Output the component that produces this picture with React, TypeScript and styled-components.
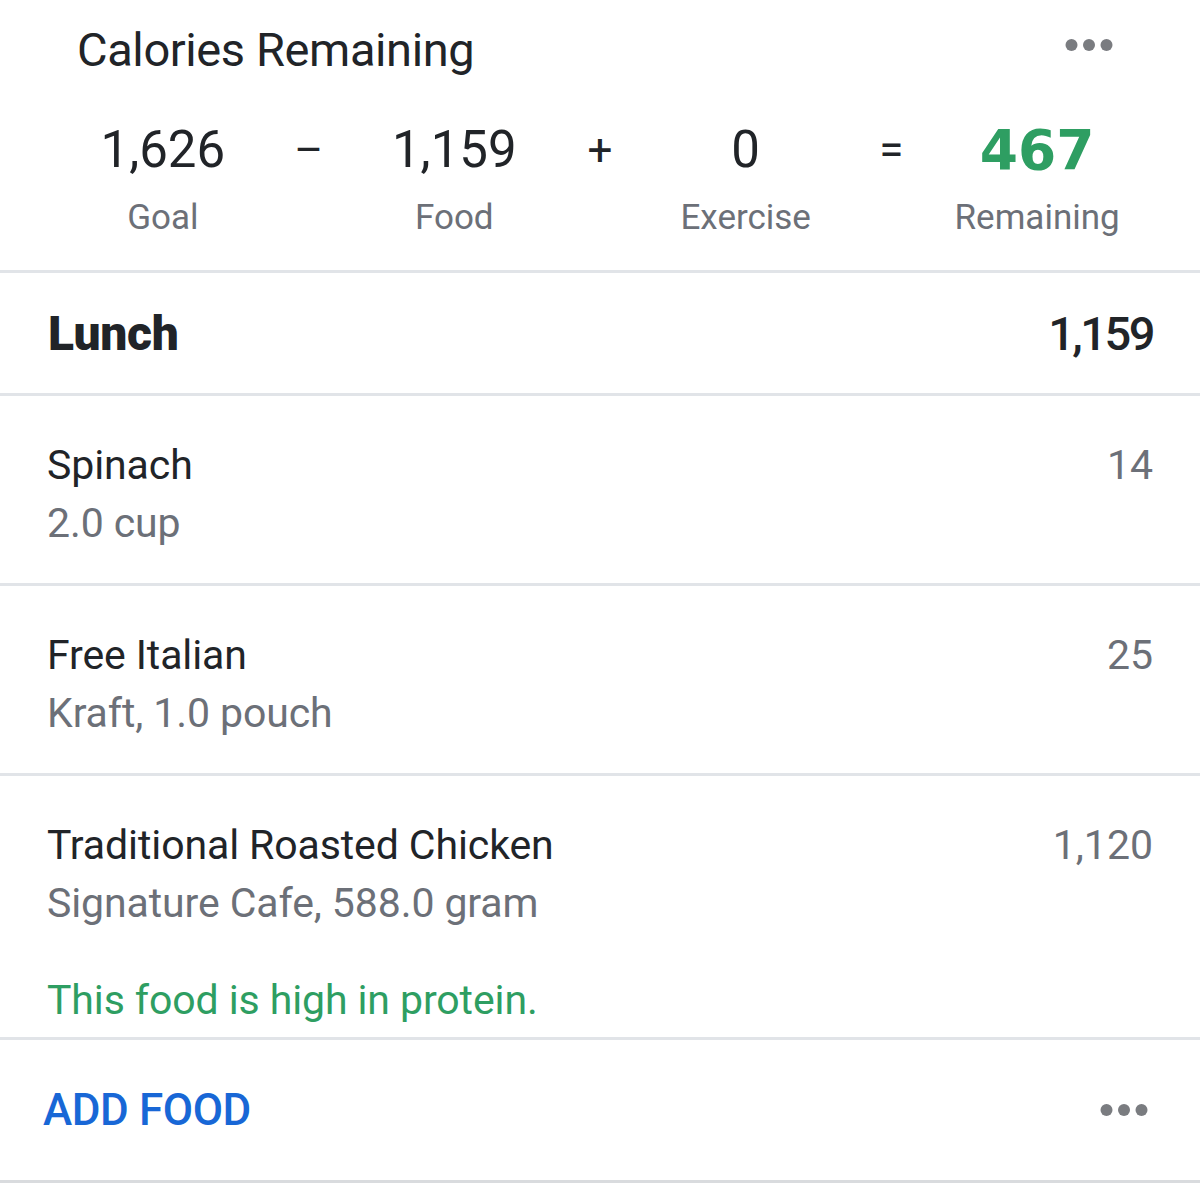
import styled, { createGlobalStyle } from 'styled-components';

const GlobalStyle = createGlobalStyle`
  html, body {
    margin: 0;
    padding: 0;
    background: #ffffff;
  }
  body {
    font-family: Roboto, 'Liberation Sans', sans-serif;
    color: #212428;
  }
  *, *::before, *::after {
    box-sizing: border-box;
  }
`;

const colors = {
  text: '#212428',
  muted: '#6c7078',
  green: '#2e9e62',
  blue: '#1867d6',
  line: '#e1e4e8',
  dots: '#7a7c80',
};

type Term = { value: string; label: string; op?: string; highlight?: boolean };

const terms: Term[] = [
  { value: '1,626', label: 'Goal', op: '–' },
  { value: '1,159', label: 'Food', op: '+' },
  { value: '0', label: 'Exercise', op: '=' },
  { value: '467', label: 'Remaining', highlight: true },
];

type Food = { name: string; detail: string; calories: string; note?: string };

const foods: Food[] = [
  { name: 'Spinach', detail: '2.0 cup', calories: '14' },
  { name: 'Free Italian', detail: 'Kraft, 1.0 pouch', calories: '25' },
  {
    name: 'Traditional Roasted Chicken',
    detail: 'Signature Cafe, 588.0 gram',
    calories: '1,120',
    note: 'This food is high in protein.',
  },
];

const Page = styled.div`
  width: 1200px;
  background: #fff;
`;

const Summary = styled.section`
  height: 273px;
  border-bottom: 3px solid ${colors.line};
  padding-top: 22px;
`;

const SummaryHeader = styled.div`
  display: flex;
  align-items: center;
  justify-content: space-between;
  padding: 0 87px 0 77px;
  height: 56px;
`;

const Title = styled.h1`
  margin: 0;
  font-size: 47px;
  font-weight: 400;
  line-height: 56px;
  letter-spacing: -0.4px;
  color: ${colors.text};
`;

const Equation = styled.div`
  display: grid;
  grid-template-columns: repeat(7, minmax(0, 1fr));
  margin: 42px 90px 0;
`;

const Cell = styled.div`
  display: flex;
  flex-direction: column;
  align-items: center;
  white-space: nowrap;
`;

const Value = styled.div<{ $highlight?: boolean }>`
  font-family: ${({ $highlight }) =>
    $highlight ? "'DejaVu Sans', Roboto, sans-serif" : 'inherit'};
  font-size: ${({ $highlight }) => ($highlight ? '55px' : '51px')};
  font-weight: ${({ $highlight }) => ($highlight ? 700 : 400)};
  line-height: 60px;
  color: ${({ $highlight }) => ($highlight ? colors.green : colors.text)};
`;

const Label = styled.div`
  margin-top: 18px;
  font-size: 35px;
  line-height: 40px;
  color: ${colors.muted};
`;

const Operator = styled.div`
  font-size: 44px;
  line-height: 60px;
  text-align: center;
  color: ${colors.text};
`;

const MealHeader = styled.div`
  display: flex;
  align-items: center;
  justify-content: space-between;
  height: 123px;
  padding: 0 47px 0 48px;
  border-bottom: 3px solid ${colors.line};
`;

const MealName = styled.div`
  font-size: 48px;
  font-weight: 900;
  letter-spacing: -0.3px;
`;

const MealTotal = styled.div`
  font-size: 47px;
  font-weight: 500;
  letter-spacing: -2.5px;
`;

const FoodRow = styled.div`
  display: flex;
  align-items: flex-start;
  justify-content: space-between;
  min-height: 190px;
  padding: 40px 47px 8px;
  border-bottom: 3px solid ${colors.line};
`;

const FoodInfo = styled.div`
  display: flex;
  flex-direction: column;
`;

const FoodName = styled.div`
  font-size: 41px;
  line-height: 58px;
  letter-spacing: -0.1px;
  color: ${colors.text};
`;

const FoodDetail = styled(FoodName)`
  color: ${colors.muted};
`;

const FoodNote = styled(FoodName)`
  margin-top: 39px;
  color: ${colors.green};
`;

const FoodCalories = styled.div`
  font-size: 41px;
  line-height: 58px;
  color: ${colors.muted};
`;

const Footer = styled.div`
  display: flex;
  align-items: center;
  justify-content: space-between;
  height: 143px;
  padding: 0 52px 0 43px;
  border-bottom: 3px solid #d9dbde;
`;

const AddFood = styled.button`
  border: 0;
  background: none;
  padding: 0;
  font-family: inherit;
  font-size: 44px;
  font-weight: 500;
  letter-spacing: -0.4px;
  color: ${colors.blue};
  cursor: pointer;
`;

const MoreButton = styled.button<{ $lift?: number }>`
  display: flex;
  border: 0;
  background: none;
  padding: 0;
  margin-bottom: ${({ $lift }) => ($lift ? `${$lift}px` : '0')};
  cursor: pointer;
`;

const MoreDots = ({ lift }: { lift?: number }) => (
  <MoreButton aria-label="More" $lift={lift}>
    <svg width="48" height="14" viewBox="0 0 48 14">
      <circle cx="6.5" cy="7" r="6" fill={colors.dots} />
      <circle cx="24" cy="7" r="6" fill={colors.dots} />
      <circle cx="41.5" cy="7" r="6" fill={colors.dots} />
    </svg>
  </MoreButton>
);

export default function App() {
  return (
    <Page>
      <GlobalStyle />
      <Summary>
        <SummaryHeader>
          <Title>Calories Remaining</Title>
          <MoreDots lift={10} />
        </SummaryHeader>
        <Equation>
          {terms.flatMap((t) => {
            const cells = [
              <Cell key={t.label}>
                <Value $highlight={t.highlight}>{t.value}</Value>
                <Label>{t.label}</Label>
              </Cell>,
            ];
            if (t.op) cells.push(<Operator key={t.label + '-op'}>{t.op}</Operator>);
            return cells;
          })}
        </Equation>
      </Summary>

      <MealHeader>
        <MealName>Lunch</MealName>
        <MealTotal>1,159</MealTotal>
      </MealHeader>

      {foods.map((f) => (
        <FoodRow key={f.name}>
          <FoodInfo>
            <FoodName>{f.name}</FoodName>
            <FoodDetail>{f.detail}</FoodDetail>
            {f.note && <FoodNote>{f.note}</FoodNote>}
          </FoodInfo>
          <FoodCalories>{f.calories}</FoodCalories>
        </FoodRow>
      ))}

      <Footer>
        <AddFood>ADD FOOD</AddFood>
        <MoreDots />
      </Footer>
    </Page>
  );
}
